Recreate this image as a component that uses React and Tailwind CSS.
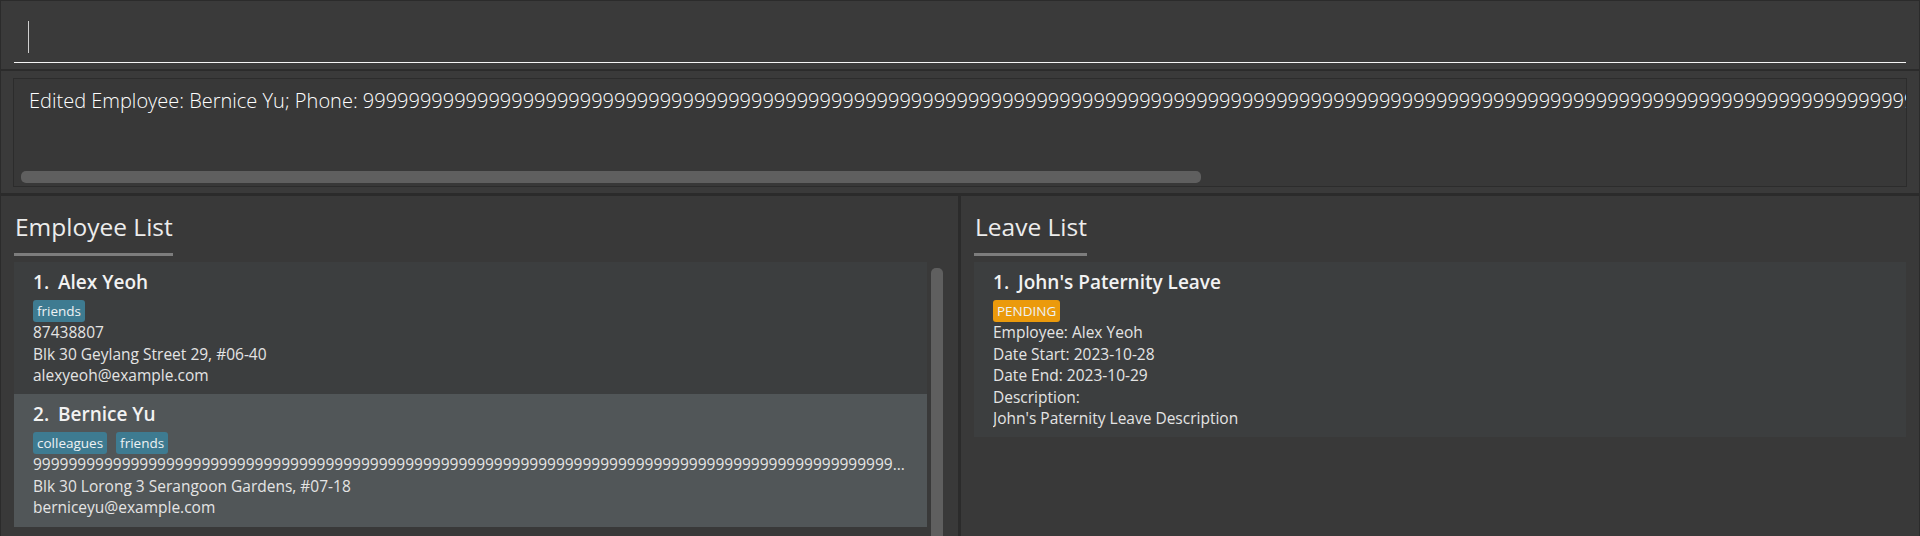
const PEOPLE = [
  {
    id: 1,
    name: 'Alex Yeoh',
    tags: ['friends'],
    phone: '87438807',
    address: 'Blk 30 Geylang Street 29, #06-40',
    email: 'alexyeoh@example.com',
  },
  {
    id: 2,
    name: 'Bernice Yu',
    tags: ['colleagues', 'friends'],
    phone: '9'.repeat(140),
    address: 'Blk 30 Lorong 3 Serangoon Gardens, #07-18',
    email: 'berniceyu@example.com',
  },
]

const LEAVES = [
  {
    id: 1,
    title: "John's Paternity Leave",
    status: 'PENDING',
    employee: 'Alex Yeoh',
    start: '2023-10-28',
    end: '2023-10-29',
    description: "John's Paternity Leave Description",
  },
]

function Header({ title, width }) {
  return (
    <div className="pt-[14px]">
      <div className={`${width} pb-[9px] border-b-[3px] border-[#7d7d7d]`}>
        <span className="block pl-px text-[24.5px] leading-[34px] font-medium text-[#ececec] whitespace-nowrap">{title}</span>
      </div>
    </div>
  )
}

function CardTitle({ index, text }) {
  return (
    <div className="flex text-[19px] leading-[27px] font-semibold text-[#f2f2f2] whitespace-nowrap">
      <span className="w-[25px] shrink-0">{index}.</span>
      <span>{text}</span>
    </div>
  )
}

function Tag({ children, color }) {
  return (
    <span className={`h-[22px] px-[4px] rounded-[3px] text-[13.5px] leading-[22px] text-[#eef2f4] ${color}`}>
      {children}
    </span>
  )
}

function Line({ children }) {
  return (
    <div className="text-[15.5px] leading-[21.6px] text-[#e4e4e4] whitespace-nowrap overflow-hidden text-ellipsis">
      {children}
    </div>
  )
}

function PersonCard({ person, odd }) {
  return (
    <div className={`pl-[19px] pr-[16px] pt-[7px] pb-[7.5px] ${odd ? 'bg-[#515658]' : 'bg-[#3c3e3f]'}`}>
      <CardTitle index={person.id} text={person.name} />
      <div className="flex gap-[9px] mt-[4px]">
        {person.tags.map(t => (
          <Tag key={t} color="bg-[#3e7b91]">{t}</Tag>
        ))}
      </div>
      <Line>{person.phone}</Line>
      <Line>{person.address}</Line>
      <Line>{person.email}</Line>
    </div>
  )
}

function LeaveCard({ leave }) {
  return (
    <div className="pl-[19px] pr-[16px] pt-[7px] pb-[7.5px] bg-[#3c3e3f]">
      <CardTitle index={leave.id} text={leave.title} />
      <div className="flex mt-[4px]">
        <Tag color="bg-[#eb9a0c]">{leave.status}</Tag>
      </div>
      <Line>Employee: {leave.employee}</Line>
      <Line>Date Start: {leave.start}</Line>
      <Line>Date End: {leave.end}</Line>
      <Line>Description:</Line>
      <Line>{leave.description}</Line>
    </div>
  )
}

export default function App() {
  const result = 'Edited Employee: Bernice Yu; Phone: ' + '9'.repeat(200)

  return (
    <div className="w-[1920px] h-[536px] overflow-hidden bg-[#2b2b2b] flex flex-col font-['Open_Sans',sans-serif]">
      {/* command box */}
      <div className="mt-px mx-px h-[68px] shrink-0 bg-[#3a3a3a] px-[13px] pt-[20px]">
        <div className="h-[42px] border-b border-[#f4f4f4]">
          <div className="ml-[14px] w-px h-[32px] bg-[#cfcfcf]" />
        </div>
      </div>

      {/* result display */}
      <div className="mt-[2px] mx-px h-[122px] shrink-0 bg-[#3a3a3a] px-[12px] pt-[7px]">
        <div className="relative h-[109px] border border-[#2c2c2c] bg-[#383838] overflow-hidden">
          <div className="pl-[15px] pt-[8px] text-[20px] leading-[28px] font-light text-white whitespace-nowrap">
            {result}
          </div>
          <div className="absolute left-[7px] top-[92px] w-[1180px] h-[12px] rounded-[5px] bg-[#5f5f5f]" />
        </div>
      </div>

      {/* lists */}
      <div className="mt-[3px] mx-px flex flex-1 gap-[3px] min-h-0">
        <div className="w-[957px] shrink-0 bg-[#393939] pl-[13px] flex flex-col">
          <Header title="Employee List" width="w-[159px]" />
          <div className="mt-[6px] flex flex-1 min-h-0">
            <div className="w-[913px] shrink-0">
              {PEOPLE.map((p, i) => (
                <PersonCard key={p.id} person={p} odd={i % 2 === 1} />
              ))}
            </div>
            <div className="ml-[4px] mt-[6px] w-[12px] h-[320px] rounded-[5px] bg-[#5f5f5f]" />
          </div>
        </div>
        <div className="flex-1 bg-[#393939] px-[13px] flex flex-col">
          <Header title="Leave List" width="w-[113px]" />
          <div className="mt-[6px]">
            {LEAVES.map(l => (
              <LeaveCard key={l.id} leave={l} />
            ))}
          </div>
        </div>
      </div>
    </div>
  )
}
